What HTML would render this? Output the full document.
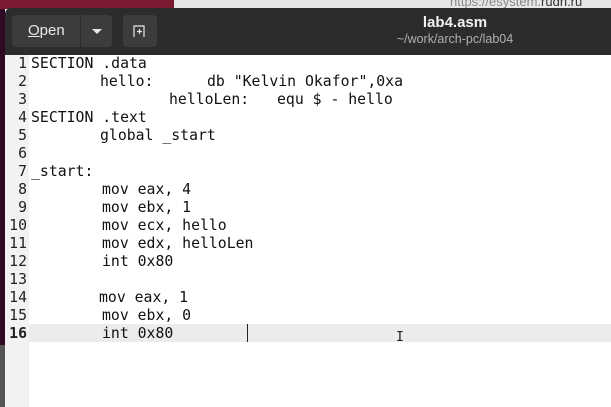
<!DOCTYPE html>
<html><head><meta charset="utf-8"><style>
*{margin:0;padding:0;box-sizing:border-box}
body{width:611px;height:407px;overflow:hidden;position:relative;background:#fff;font-family:"Liberation Sans",sans-serif}
.a{position:absolute}
.code{font-family:"DejaVu Sans Mono","Liberation Mono",monospace;font-size:14.8px;color:#111;white-space:pre;line-height:18px}
.ln{position:absolute;left:5px;width:22px;text-align:right;font-family:"DejaVu Sans Mono",monospace;font-size:14.8px;line-height:18px;color:#222}
</style></head><body>
<div class="a" style="left:0;top:0;width:174px;height:9px;background:#7b1b32"></div>
<div class="a" style="left:174px;top:0;width:437px;height:9px;background:#e6e6e6"></div>
<div class="a" style="left:450px;top:-6px;font-size:13px;color:#888">https://esystem.<span style="color:#333">rudn.ru</span></div>
<div class="a" style="left:0;top:9px;width:5px;height:398px;background:#300a24"></div>
<div class="a" style="left:0;top:345px;width:5px;height:62px;background:#555"></div>
<div class="a" style="left:5px;top:8px;width:606px;height:47px;background:#2c2c2c;border-radius:6px 0 0 0"></div>
<div class="a" style="left:12px;top:15px;width:100px;height:32px;background:#3c3c3c;border-radius:4px"></div>
<div class="a" style="left:80px;top:15px;width:1px;height:32px;background:#2a2a2a"></div>
<div class="a" style="left:28px;top:22px;color:#e8e8e8;font-size:15px"><u>O</u>pen</div>
<div class="a" style="left:92px;top:29px;width:0;height:0;border-left:5px solid transparent;border-right:5px solid transparent;border-top:5px solid #e8e8e8"></div>
<div class="a" style="left:123px;top:15px;width:34px;height:32px;background:#3c3c3c;border-radius:4px"></div>
<svg class="a" style="left:132px;top:24px" width="16" height="14"><path d="M2 13V2h10v11M5 7.5h5M7.5 5v5" stroke="#e8e8e8" stroke-width="1.2" fill="none"/></svg>
<div class="a" style="left:355px;top:14px;width:200px;text-align:center;color:#f2f2f2;font-size:15px;font-weight:bold">lab4.asm</div>
<div class="a" style="left:355px;top:32px;width:200px;text-align:center;color:#b0b0b0;font-size:12.5px">~/work/arch-pc/lab04</div>
<div class="a" style="left:5px;top:55px;width:24px;height:352px;background:#f2f2f2"></div>
<div class="a" style="left:29px;top:324px;width:582px;height:18px;background:#ececec"></div>
<div class="a" style="left:247px;top:324px;width:1px;height:18px;background:#222"></div>
<div class="a" style="left:396px;top:330px;font-size:13px;color:#222;font-family:'DejaVu Sans Mono',monospace">I</div>
<div class="ln" style="top:55px">1</div><div class="ln" style="top:73px">2</div><div class="ln" style="top:91px">3</div><div class="ln" style="top:109px">4</div><div class="ln" style="top:127px">5</div><div class="ln" style="top:145px">6</div><div class="ln" style="top:163px">7</div><div class="ln" style="top:181px">8</div><div class="ln" style="top:199px">9</div><div class="ln" style="top:217px">10</div><div class="ln" style="top:235px">11</div><div class="ln" style="top:253px">12</div><div class="ln" style="top:271px">13</div><div class="ln" style="top:289px">14</div><div class="ln" style="top:307px">15</div><div class="ln" style="top:325px;font-weight:bold">16</div>
<div class="a code" style="left:31px;top:55px">SECTION .data</div>
<div class="a code" style="left:100px;top:73px">hello:</div>
<div class="a code" style="left:207px;top:73px">db "Kelvin Okafor",0xa</div>
<div class="a code" style="left:169px;top:91px">helloLen:</div>
<div class="a code" style="left:277px;top:91px">equ $ - hello</div>
<div class="a code" style="left:31px;top:109px">SECTION .text</div>
<div class="a code" style="left:100px;top:127px">global _start</div>
<div class="a code" style="left:31px;top:163px">_start:</div>
<div class="a code" style="left:102px;top:181px">mov eax, 4</div>
<div class="a code" style="left:102px;top:199px">mov ebx, 1</div>
<div class="a code" style="left:102px;top:217px">mov ecx, hello</div>
<div class="a code" style="left:102px;top:235px">mov edx, helloLen</div>
<div class="a code" style="left:102px;top:253px">int 0x80</div>
<div class="a code" style="left:99px;top:289px">mov eax, 1</div>
<div class="a code" style="left:102px;top:307px">mov ebx, 0</div>
<div class="a code" style="left:102px;top:325px">int 0x80</div>
</body></html>
